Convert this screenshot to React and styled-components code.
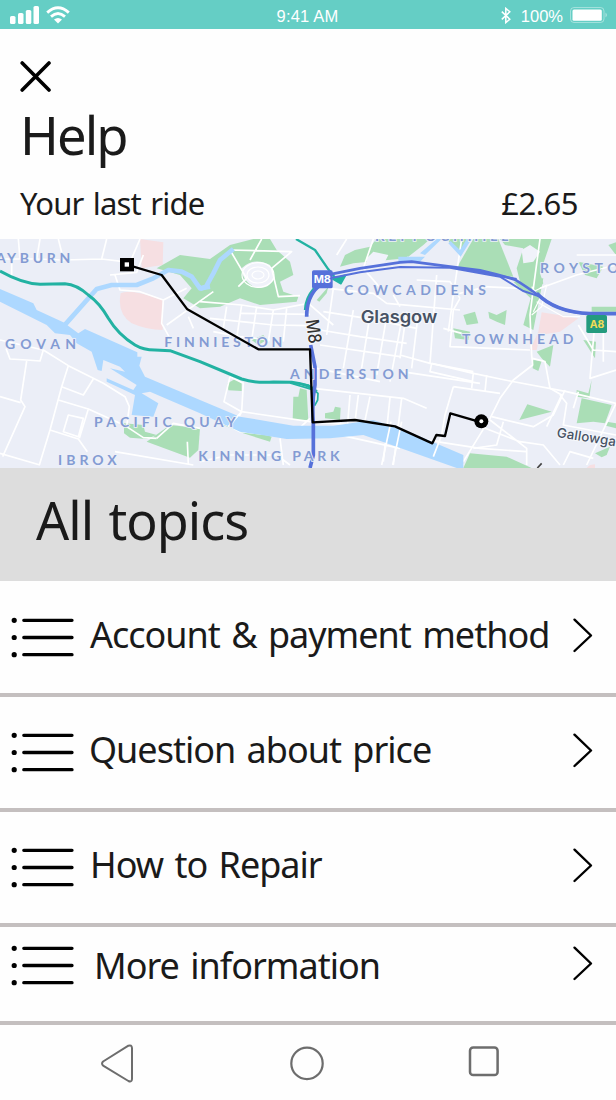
import React from "react";
import styled, { createGlobalStyle } from "styled-components";

const GlobalStyle = createGlobalStyle`
  * { box-sizing: border-box; }
  body { margin: 0; background: #fefefe; }
  svg { display: block; flex: none; }
`;

const Screen = styled.main`
  width: 616px;
  height: 1100px;
  display: flex;
  flex-direction: column;
  overflow: hidden;
  background: #fefefe;
  color: #1a1a1a;
  font-family: "Noto Sans", sans-serif;
`;

const StatusBar = styled.div`
  height: 29px;
  flex: none;
  display: grid;
  grid-template-columns: 1fr auto 1fr;
  align-items: center;
  padding: 0 8px 0 10px;
  background: #65cec5;
  color: #fff;
  font: 16.5px/28px "Liberation Sans", Arial, sans-serif;
`;

const Signals = styled.div`
  display: flex;
  align-items: center;
  gap: 7px;
`;

const Power = styled.div`
  display: flex;
  align-items: center;
  justify-content: flex-end;
`;

const Clock = styled.span`
  padding: 2px 3px 0 0;
  letter-spacing: 0.2px;
`;

const Percent = styled.span`
  padding: 2px 7px 0 8px;
`;

const Header = styled.header`
  height: 210px;
  flex: none;
  display: flex;
  flex-direction: column;
  padding: 31px 38px 0 20px;
`;

const CloseButton = styled.button`
  width: 32px;
  height: 32px;
  padding: 0;
  border: 0;
  background: none;
`;

const Title = styled.h1`
  margin: 8px 0 0;
  font-size: 52.5px;
  line-height: 70px;
  font-weight: 400;
  letter-spacing: -1.9px;
`;

const RideRow = styled.div`
  display: flex;
  justify-content: space-between;
  margin-top: 13px;
  font-size: 31px;
  line-height: 40px;
  font-weight: 400;
`;

const RideText = styled.span`
  letter-spacing: ${(p) => p.$tracking}px;
  word-spacing: 2px;
`;

const TopicsBand = styled.h2`
  margin: 0;
  height: 113px;
  flex: none;
  padding: 17px 0 0 36px;
  background: #ddd;
  font-size: 52px;
  line-height: 70px;
  font-weight: 400;
  letter-spacing: -1px;
  word-spacing: 3px;
`;

const TopicRow = styled.div`
  height: ${(p) => p.$height}px;
  flex: none;
  display: flex;
  align-items: flex-start;
  padding: ${(p) => p.$top}px 22px 0 11px;
  border-bottom: 4.5px solid #c4bfbf;
`;

const TopicLabel = styled.span`
  flex: 1;
  margin-top: ${(p) => p.$drop}px;
  padding-left: ${(p) => p.$indent}px;
  font-size: 36px;
  line-height: 44px;
  font-weight: 400;
  white-space: nowrap;
  letter-spacing: -1px;
  word-spacing: 3px;
`;

const NavBar = styled.nav`
  flex: 1;
  display: flex;
  align-items: flex-start;
  padding: 19px 116px 0 100px;
`;

const NavSlot = styled.span`
  margin-left: ${(p) => p.$gap}px;
`;

const SignalIcon = () => (
  <svg width="29" height="18" fill="#fff">
    <rect x="0" y="10" width="5.5" height="8" rx="1.6" />
    <rect x="8" y="7" width="5.5" height="11" rx="1.6" />
    <rect x="15.8" y="4" width="5.5" height="14" rx="1.6" />
    <rect x="23.5" y="0" width="5.5" height="18" rx="1.6" />
  </svg>
);

const WifiIcon = () => (
  <svg width="24" height="18" fill="none" stroke="#fff" strokeWidth="2.8">
    <path d="M1.2 6.6 Q12-3.2 22.8 6.6" />
    <path d="M5 10.6 Q12 4.3 19 10.6" />
    <path d="M8 13.6 Q12 10.4 16 13.6 L12 17.4Z" fill="#fff" stroke="none" />
  </svg>
);

const BluetoothIcon = () => (
  <svg width="12" height="17" fill="none" stroke="#fff" strokeWidth="1.5">
    <path d="M.8 4.6 8.8 12.2 4.8 15.6V1.4L8.8 4.8.8 12.4" />
  </svg>
);

const BatteryIcon = () => (
  <svg width="38" height="16">
    <rect x=".5" y=".5" width="33.5" height="15" rx="3.5" fill="none" stroke="#fff" strokeOpacity=".4" />
    <rect x="2.5" y="2.5" width="29.3" height="11.3" rx="1.5" fill="#fff" />
    <path d="M35.6 5.5Q37.8 8 35.6 10.5Z" fill="#fff" fillOpacity=".6" />
  </svg>
);

const ListIcon = () => (
  <svg width="64" height="41" fill="none" stroke="#000" strokeLinecap="round">
    <path strokeWidth="3.3" d="M12.8 3.3H61M12.8 20.5H61M12.8 37.7H61" />
    <path strokeWidth="5.2" d="M3.2 3.3h.01M3.2 20.5h.01M3.2 37.7h.01" />
  </svg>
);

const Chevron = () => (
  <svg width="22" height="36" fill="none" stroke="#000" strokeWidth="2.4" strokeLinecap="round" strokeLinejoin="round">
    <path d="M2.5 2.7 19 18.5 2.5 34" />
  </svg>
);

const roads = [
  "M0 72H110L190 75 305 72 390 82 420 12M110 72 120 12M190 72 175 12M305 72 320 12M35 72V125M60 72 55 12",
  "M0 315 130 345 205 392 310 445 375 485 388 515 380 575 430 608 470 610",
  "M130 345 120 378 80 375 30 372 18 340M80 378 62 495 75 515 8 665M0 485 62 503M205 392 185 455 150 585 118 690",
  "M185 455 250 480 280 432M175 495 265 522 238 610M265 522 360 565M150 585 235 612 262 650M205 540 190 590 235 605 250 550Z",
  "M0 655 120 690M345 650 580 690M470 610 520 565 600 580M562 620 565 690",
  "M345 120 360 165 420 170 490 195 485 265 510 310M500 270 640 170M565 245 580 280M490 195 560 160M330 120 410 112 430 60",
  "M600 200 725 210 820 225 925 205 1000 270M640 290 720 305 810 315M680 215 670 280M725 210 710 310M770 215 755 315M820 225 805 320M860 220 850 320",
  "M630 250 820 270 930 272M720 235 930 238M690 425 730 445 725 530M690 425 672 500 725 530 930 560 1200 580",
  "M620 540 720 590 870 605 930 550M725 530 700 580M750 75 785 12M690 45 875 50 815 100M815 100 835 185 900 182M690 45 740 130 715 155",
  "M970 230 1100 250 1250 280M960 285 1080 305 1220 325M960 330 1200 365M950 400 1140 440M1000 160 980 300M1060 225 1030 400M1110 240 1080 430M1160 245 1130 420M1210 230 1170 440",
  "M985 160 1120 175 1160 205 1380 225M1040 12 1010 60M1120 12 1090 100 1150 170M1180 180 1200 215",
  "M940 460 1210 490 1280 520M1050 480 1040 600M1075 480 1065 560M1110 485 1090 580M1170 488 1150 680M1205 490 1180 690M1145 600 1320 620M1205 410 1440 445",
  "M1220 230 1200 370M1255 235 1235 400M1310 120 1290 385M1200 360 1290 385 1420 410M1250 135 1350 140 1380 190M1345 290 1360 180 1460 155",
  "M1380 190 1360 225 1350 335 1590 345M1330 280 1385 295M1360 180 1385 12M1450 155 1560 160",
  "M1295 385 1420 415 1530 438 1700 470 1848 505M1420 412 1415 460M1460 420 1455 470M1295 385 1290 410 1420 440",
  "M1620 12 1600 160 1590 240 1595 360 1598 390 1540 435 1500 490 1470 550 1390 680M1598 370 1635 380 1650 460 1685 480 1640 575",
  "M1360 455 1500 475M1360 455 1335 540 1325 600M1475 545 1600 575 1660 540 1695 465M1680 480 1700 505 1690 570 1848 600",
  "M1430 570 1560 620 1630 630 1680 690M1470 555 1580 640 1580 690M1510 560 1490 630 1420 640M1690 690 1710 650 1780 670",
  "M1735 270 1780 345 1848 350M1785 260 1770 430 1848 405M1810 265 1810 380M1735 470 1720 520M1848 505 1760 690M1620 160 1730 120 1848 90M1730 60 1848 60",
  "M600 680 690 660 830 660 870 690M840 610 850 690M930 580 1200 640M1265 650 1390 690M1310 620 1440 640 1580 650",
];

const parks = [
  "M470 100 540 60 630 72 690 30 760 12 810 12 830 45 870 80 880 120 840 140 850 170 895 185 890 200 780 210 720 190 660 215 600 220 550 190 575 160 540 120Z",
  "M372 565 430 570 435 590 470 600 440 612 390 608 372 595Z",
  "M440 620 510 570 600 580 595 645 570 668Z",
  "M1065 45 1110 35 1130 12 1230 12 1220 70 1060 85 1020 95 1035 60Z",
  "M1195 12H1290L1270 30 1225 65 1195 60ZM1340 12 1400 12 1385 60Z",
  "M1372 95 1420 12H1495L1540 125 1460 120Z",
  "M1500 12H1655L1620 115 1630 145 1600 180 1560 140 1550 100 1570 40 1515 30Z",
  "M1540 140 1630 130 1600 285 1570 270 1592 190Z",
  "M1390 240 1425 230 1435 265 1400 270Z",
  "M1465 230 1490 240 1520 225 1515 270 1490 260 1468 250Z",
  "M1360 280 1410 290 1405 315 1365 310ZM1610 350 1660 330 1650 395 1625 370ZM1600 375 1625 378 1615 408 1598 400Z",
  "M1558 555 1582 508 1655 530ZM1750 315 1788 320 1785 370ZM1745 490 1835 510 1815 565 1780 560 1730 565Z",
  "M1730 465 1765 475 1775 435 1768 490 1730 485ZM1410 655 1520 665 1595 699H1390ZM1820 560 1848 565V580L1818 572Z",
  "M1785 655 1830 635 1820 660 1805 667ZM1775 215H1848V230H1775ZM1735 80 1810 95 1790 130 1755 120ZM1825 30 1848 22V60Z",
  "M683 445 705 432 725 445 725 468 685 466ZM880 485 895 485 900 460 920 465 925 555 878 555Z",
  "M975 535 1000 530 1005 515 1022 518 1020 555 975 550ZM670 570 740 580 815 605 810 620 730 595Z",
  "M950 195 985 155 980 175 958 200ZM755 315 790 300 800 315 775 330Z",
];

const labels = [
  ["YBURN", 21, 84, 190],
  ["GOVAN", 15, 341, 213],
  ["FINNIESTON", 493, 337, 354],
  ["PACIFIC QUAY", 282, 575, 425],
  ["IBROX", 174, 689, 176],
  ["KINNING PARK", 595, 678, 424],
  ["ANDERSTON", 870, 432, 356],
  ["COWCADDENS", 1032, 180, 426],
  ["TOWNHEAD", 1386, 328, 334],
  ["ROYSTO", 1620, 115, 236],
];

const CityMap = () => (
  <svg width="616" height="229" viewBox="0 12 1848 687" fontFamily="Lato, sans-serif">
    <rect y="12" width="1848" height="687" fill="#ebeef7" />
    <g fill="#f6dfe2">
      <path d="M420 12 490 22 488 90 425 100ZM362 175Q390 160 488 195V285Q440 285 395 265 350 235 362 175Z" />
      <path d="M1625 232 1735 250 1680 290 1620 300 1610 345H1590L1615 290ZM1770 690 1785 688V699H1760Z" />
    </g>
    <g fill="#aadeb6">{parks.map((d) => <path key={d} d={d} />)}</g>
    <g fill="#f0f2fa">
      <path d="M725 100Q760 65 810 90L825 130Q800 170 760 155 725 135 725 100ZM1100 70 1120 50 1165 60 1150 90 1100 100ZM1565 45 1590 30 1620 50 1600 80 1570 85Z" />
    </g>
    <g fill="none" stroke="#fff">
      <g strokeWidth="5" strokeLinejoin="round">{roads.map((d) => <path key={d} d={d} />)}</g>
      <g strokeWidth="3.5">
        <ellipse cx="774" cy="120" rx="48" ry="37" />
        <ellipse cx="774" cy="120" rx="33" ry="24" />
        <ellipse cx="774" cy="120" rx="18" ry="12" />
        <path d="M1600 170 1640 150 1625 215 1595 240M1595 155 1620 190 1600 230M1610 200 1690 245 1740 245" />
      </g>
    </g>
    <g fill="#add8ff">
      <path d="M0 162 100 205 110 225 190 262 235 295 255 282 412 352V365H425L418 392 435 425 600 495 720 545 880 572 1000 572 1120 555 1230 592 1390 660V699H1370L1190 635 1090 600 990 610 860 612 720 590 600 535 450 470 425 475 475 505 460 545 395 540 405 480 320 440V430L400 465 410 450 330 400 375 410 360 395 310 375 305 408 293 405 275 350 230 325 210 300 165 295 140 270 0 200Z" />
      <path d="M1195 65H1275L1260 80H1195ZM1260 55 1310 12H1325L1275 60ZM1345 25 1382 65 1415 12H1400L1380 45 1352 18Z" />
    </g>
    <g fill="none" stroke="#add8ff" strokeLinejoin="round">
      <path strokeWidth="14" d="M190 275 290 162 335 150 410 150 460 130 505 105 545 110 575 125 600 160 630 155" />
      <path strokeWidth="14" d="M600 162 618 155 640 115 660 75 700 42" />
    </g>
    <g fill="none" stroke="#fff" strokeWidth="5">
      <path d="M1173 560 1145 690M1205 560 1178 690M1325 600 1300 665M725 530 685 575" />
    </g>
    <g fill="none" stroke="#22b2a2" strokeLinejoin="round">
      <path strokeWidth="9" d="M0 108Q65 145 120 148L195 146Q230 148 265 180 300 205 325 250 355 300 405 330 430 345 465 345L510 347 600 380 725 432Q765 445 820 441L875 442Q930 448 950 470" />
      <path strokeWidth="5" d="M875 442 925 450 954 475 953 495 944 512M870 444 935 463" />
      <path strokeWidth="7" d="M888 12 945 45 985 103 1005 128M942 160Q916 190 915 225" />
      <path strokeWidth="7" d="M1000 132 1035 122 1022 145Z" fill="#22b2a2" />
    </g>
    <g fill="none" stroke="#5671da">
      <path strokeWidth="8" d="M990 118 1080 100 1200 82 1235 80 1350 95 1440 106Q1500 120 1545 134 1580 155 1620 185 1680 233 1770 236L1848 235" />
      <path strokeWidth="6" d="M990 130 1080 112 1200 96 1350 98 1500 125 1570 168 1620 185M1350 96 1500 122 1550 132" />
      <path strokeWidth="11" d="M955 155Q920 185 920 245M932 330 945 395V450Q935 500 940 565L940 660 930 699M1610 175Q1665 232 1770 236H1848" />
    </g>
    <g fontWeight="700" fill="#839bd3" stroke="#edf0f8" strokeWidth="5" paintOrder="stroke" fontSize="42">
      {labels.map(([text, x, y, width]) => (
        <text key={text} x={x} y={y} textLength={width}>{text}</text>
      ))}
      <text x="-12" y="84">A</text>
      <text x="1125" y="19" textLength="400">KEPPOCHHILL</text>
    </g>
    <g fill="#475264" stroke="#f5f7fb" strokeWidth="6" paintOrder="stroke" fontFamily="Inter, sans-serif">
      <text x="1082" y="265" fontSize="52" fontWeight="600" textLength="230" lengthAdjust="spacingAndGlyphs">Glasgow</text>
      <text x="1669" y="606" fontSize="40" fontWeight="500" textLength="216" transform="rotate(9 1669 606)">Gallowgate</text>
      <text x="917" y="256" fontSize="54" fontWeight="500" fill="#333" textLength="72" lengthAdjust="spacingAndGlyphs" transform="rotate(82 917 256)">M8</text>
    </g>
    <g fontWeight="700" fontSize="32" fontFamily="Inter, sans-serif">
      <rect x="936" y="106" width="62" height="54" rx="5" fill="#5671da" />
      <text x="941" y="144" fill="#fff" textLength="52" lengthAdjust="spacingAndGlyphs">M8</text>
      <rect x="1759" y="240" width="62" height="54" rx="5" fill="#239b7e" />
      <text x="1769" y="279" fill="#f1dc56" textLength="44" lengthAdjust="spacingAndGlyphs">A8</text>
    </g>
    <g fill="none" stroke="#000" strokeLinejoin="round">
      <path strokeWidth="7" d="M380 89 485 120 562 223 775 343H930L938 562 1065 555 1185 574 1297 625 1309 600 1335 603 1351 535 1444 562" />
      <path stroke="#444" strokeWidth="5" d="M1612 699 1625 685" />
    </g>
    <rect x="360" y="69" width="42" height="40" />
    <rect x="374" y="82" width="13" height="13" fill="#fff" />
    <circle cx="1444" cy="559" r="21" />
    <circle cx="1444" cy="559" r="6" fill="#fff" />
  </svg>
);

const BackIcon = () => (
  <svg width="34" height="40" fill="none" stroke="#6d6d6d" strokeWidth="2">
    <path strokeLinejoin="round" d="M3.1 17.5Q1 19.5 3.1 21.6L28.4 37Q31.8 38.5 32 35V4Q31.6.5 28.4 1.7Z" />
  </svg>
);
const HomeIcon = () => (
  <svg width="34" height="40" fill="none" stroke="#6d6d6d" strokeWidth="2.2">
    <circle cx="17" cy="19.4" r="15.7" />
  </svg>
);
const RecentsIcon = () => (
  <svg width="32" height="40" fill="none" stroke="#6d6d6d" strokeWidth="2.5">
    <rect x="2" y="3.5" width="27.6" height="27.6" rx="3.2" />
  </svg>
);

const topics = [
  { label: "Account & payment method", height: 116, top: 36, indent: 15, drop: -4 },
  { label: "Question about price", height: 115, top: 35, indent: 14, drop: -4 },
  { label: "How to Repair", height: 115, top: 35, indent: 15, drop: -4 },
  { label: "More information", height: 98, top: 18, indent: 19, drop: -1 },
];

export default function App() {
  return (
    <Screen>
      <GlobalStyle />
      <StatusBar>
        <Signals><SignalIcon /><WifiIcon /></Signals>
        <Clock>9:41 AM</Clock>
        <Power><BluetoothIcon /><Percent>100%</Percent><BatteryIcon /></Power>
      </StatusBar>
      <Header>
        <CloseButton aria-label="Close">
          <svg width="32" height="32" stroke="#000" strokeWidth="3.6" strokeLinecap="round">
            <path d="M2.2 3 29 30M29 3 2.2 30" />
          </svg>
        </CloseButton>
        <Title>Help</Title>
        <RideRow>
          <RideText $tracking={-0.8}>Your last ride</RideText>
          <RideText $tracking={-0.5}>£2.65</RideText>
        </RideRow>
      </Header>
      <CityMap />
      <TopicsBand>All topics</TopicsBand>
      {topics.map((t) => (
        <TopicRow key={t.label} $height={t.height} $top={t.top}>
          <ListIcon />
          <TopicLabel $indent={t.indent} $drop={t.drop}>{t.label}</TopicLabel>
          <Chevron />
        </TopicRow>
      ))}
      <NavBar>
        <NavSlot $gap={0}><BackIcon /></NavSlot>
        <NavSlot $gap={156}><HomeIcon /></NavSlot>
        <NavSlot $gap={144}><RecentsIcon /></NavSlot>
      </NavBar>
    </Screen>
  );
}
